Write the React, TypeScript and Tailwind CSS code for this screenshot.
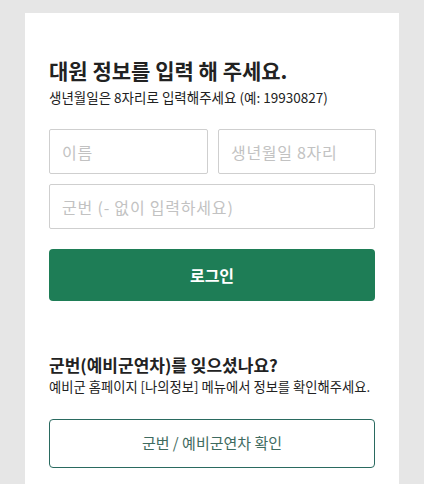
import React from "react";

const font = { fontFamily: '"Noto Sans CJK KR", "Noto Sans", sans-serif' };

export default function App() {
  return (
    <div className="min-h-[484px] bg-[#e6e6e6] px-[25px] pt-[13px]" style={font}>
      <div className="bg-white px-[24px] pt-[43px] pb-[20px] min-h-[471px]">
        <h1 className="text-[21px] leading-[28px] font-bold text-[#222]">대원 정보를 입력 해 주세요.</h1>
        <p className="mt-[3px] text-[13.5px] leading-[20px] text-[#222]">
          생년월일은 8자리로 입력해주세요 (예: 19930827)
        </p>
        <div className="mt-[22px] flex flex-col gap-[10px]">
          <div className="flex gap-[10px]">
            <input
              placeholder="이름"
              className="h-[45px] w-[159px] rounded-[2px] border border-[#cfcfcf] px-[12px] text-[16px] tracking-[0.7px] placeholder:text-[#c2c2c2] outline-none"
            />
            <input
              placeholder="생년월일 8자리"
              className="h-[45px] w-[158px] rounded-[2px] border border-[#cfcfcf] px-[12px] text-[16px] tracking-[0.7px] placeholder:text-[#c2c2c2] outline-none"
            />
          </div>
          <input
            placeholder="군번 (- 없이 입력하세요)"
            className="h-[45px] w-full rounded-[2px] border border-[#cfcfcf] px-[12px] text-[16px] tracking-[0.8px] placeholder:text-[#c2c2c2] outline-none"
          />
        </div>
        <button className="mt-[20px] h-[52px] w-full rounded-[4px] bg-[#1e7d56] text-[16px] font-bold text-white">
          로그인
        </button>
        <h2 className="mt-[52px] text-[17px] leading-[24px] font-bold text-[#222]">군번(예비군연차)를 잊으셨나요?</h2>
        <p className="text-[13.3px] leading-[20px] text-[#222]">
          예비군 홈페이지 [나의정보] 메뉴에서 정보를 확인해주세요.
        </p>
        <button className="mt-[22px] h-[49px] w-full rounded-[4px] border border-[#2a6a60] bg-white text-[15px] text-[#3f6b60]">
          군번 / 예비군연차 확인
        </button>
      </div>
    </div>
  );
}
